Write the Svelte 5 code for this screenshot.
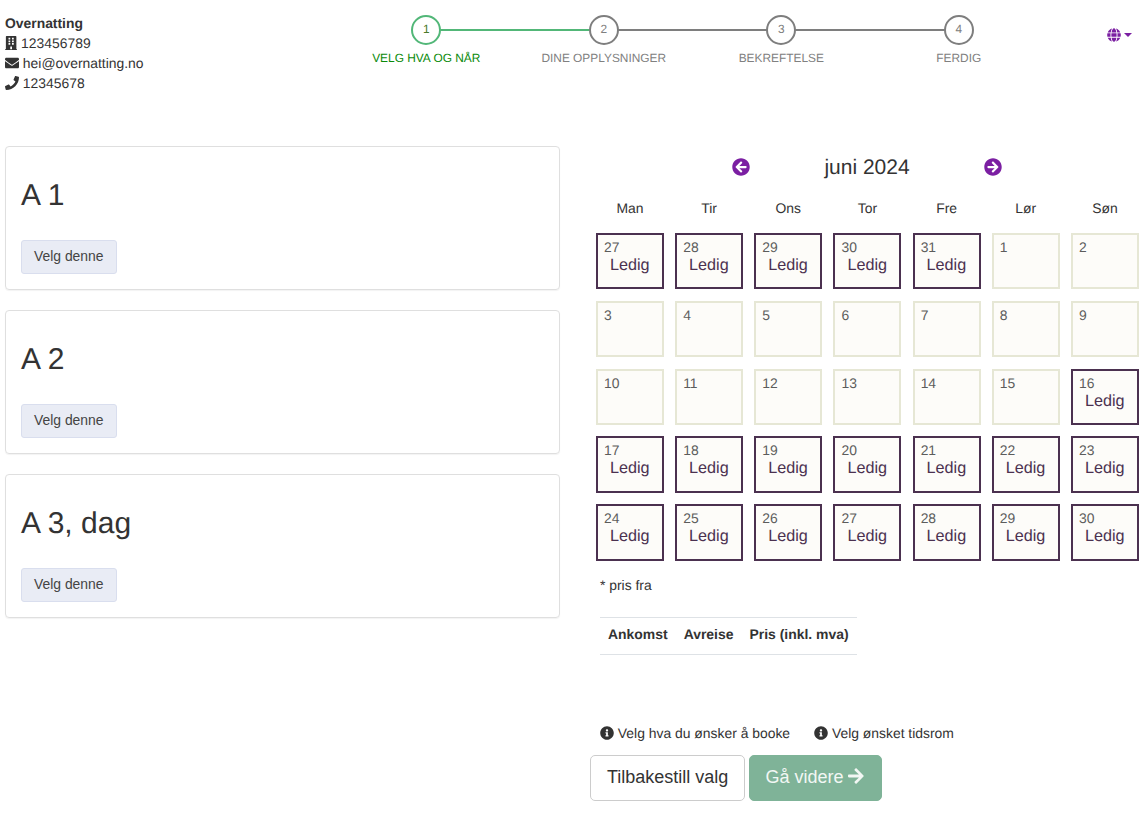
<script>
  const steps = [
    { n: 1, label: "VELG HVA OG NÅR", done: true },
    { n: 2, label: "DINE OPPLYSNINGER" },
    { n: 3, label: "BEKREFTELSE" },
    { n: 4, label: "FERDIG" },
  ];
  const rooms = ["A 1", "A 2", "A 3, dag"];
  const weekdays = ["Man", "Tir", "Ons", "Tor", "Fre", "Lør", "Søn"];

  // first row is the tail of May, 16th onwards is bookable
  const days = [
    ...[27, 28, 29, 30, 31].map(d => ({ d, free: true })),
    ...Array.from({ length: 30 }, (_, i) => ({ d: i + 1, free: i + 1 >= 16 })),
  ];

  const icons = {
    building: "M436 480h-20V24c0-13.3-10.7-24-24-24H56C42.7 0 32 10.7 32 24v456H12c-6.6 0-12 5.4-12 12v20h448v-20c0-6.6-5.4-12-12-12zM128 76c0-6.6 5.4-12 12-12h40c6.6 0 12 5.4 12 12v40c0 6.6-5.4 12-12 12h-40c-6.6 0-12-5.4-12-12V76zm0 96c0-6.6 5.4-12 12-12h40c6.6 0 12 5.4 12 12v40c0 6.6-5.4 12-12 12h-40c-6.6 0-12-5.4-12-12v-40zm52 148h-40c-6.6 0-12-5.4-12-12v-40c0-6.6 5.4-12 12-12h40c6.6 0 12 5.4 12 12v40c0 6.6-5.4 12-12 12zm76 160h-64v-84c0-6.6 5.4-12 12-12h40c6.6 0 12 5.4 12 12v84zm64-172c0 6.6-5.4 12-12 12h-40c-6.6 0-12-5.4-12-12v-40c0-6.6 5.4-12 12-12h40c6.6 0 12 5.4 12 12v40zm0-96c0 6.6-5.4 12-12 12h-40c-6.6 0-12-5.4-12-12v-40c0-6.6 5.4-12 12-12h40c6.6 0 12 5.4 12 12v40zm0-96c0 6.6-5.4 12-12 12h-40c-6.6 0-12-5.4-12-12V76c0-6.6 5.4-12 12-12h40c6.6 0 12 5.4 12 12v40z",
    envelope: "M502.3 190.8c3.9-3.1 9.7-.2 9.7 4.7V400c0 26.5-21.5 48-48 48H48c-26.5 0-48-21.5-48-48V195.6c0-5 5.7-7.8 9.7-4.7 22.4 17.4 52.1 39.5 154.1 113.6 21.1 15.4 56.7 47.8 92.2 47.6 35.7.3 72-32.8 92.3-47.6 102-74.1 131.6-96.3 154-113.7zM256 320c23.2.4 56.6-29.2 73.4-41.4 132.7-96.3 142.8-104.7 173.4-128.7 5.8-4.5 9.2-11.5 9.2-18.9v-19c0-26.5-21.5-48-48-48H48C21.5 64 0 85.5 0 112v19c0 7.4 3.4 14.3 9.2 18.9 30.6 23.9 40.7 32.4 173.4 128.7 16.8 12.2 50.2 41.8 73.4 41.4z",
    phone: "M493.4 24.6l-104-24c-11.3-2.6-22.9 3.3-27.5 13.9l-48 112c-4.2 9.8-1.4 21.3 6.9 28l60.6 49.6c-36 76.7-98.9 140.5-177.2 177.2l-49.6-60.6c-6.8-8.3-18.2-11.1-28-6.9l-112 48C3.9 366.5-2 378.1.6 389.4l24 104C27.1 504.2 36.7 512 48 512c256.1 0 464-207.5 464-464 0-11.2-7.7-20.9-18.6-23.4z",
    globe: "M336.5 160C322 70.7 287.8 8 248 8s-74 62.7-88.5 152h177zM152 256c0 22.2 1.2 43.5 3.3 64h185.3c2.1-20.5 3.3-41.8 3.3-64s-1.2-43.5-3.3-64H155.3c-2.1 20.5-3.3 41.8-3.3 64zm324.7-96c-28.6-67.9-86.5-120.4-158-141.6 24.4 33.8 41.2 84.7 50 141.6h108zM177.2 18.4C105.8 39.6 47.8 92.1 19.3 160h108c8.7-56.9 25.5-107.8 49.9-141.6zM487.4 192H372.7c2.1 21 3.3 42.5 3.3 64s-1.2 43-3.3 64h114.6c5.5-20.5 8.6-41.8 8.6-64s-3.1-43.5-8.5-64zM120 256c0-21.5 1.2-43 3.3-64H8.6C3.2 212.5 0 233.8 0 256s3.2 43.5 8.6 64h114.6c-2-21-3.2-42.5-3.2-64zm39.5 96c14.5 89.3 48.7 152 88.5 152s74-62.7 88.5-152h-177zm159.3 141.6c71.4-21.2 129.4-73.7 158-141.6h-108c-8.8 56.9-25.6 107.8-50 141.6zM19.3 352c28.6 67.9 86.5 120.4 158 141.6-24.4-33.8-41.2-84.7-50-141.6h-108z",
    info: "M256 8C119.043 8 8 119.083 8 256c0 136.997 111.043 248 248 248s248-111.003 248-248C504 119.083 392.957 8 256 8zm0 110c23.196 0 42 18.804 42 42s-18.804 42-42 42-42-18.804-42-42 18.804-42 42-42zm56 254c0 6.627-5.373 12-12 12h-88c-6.627 0-12-5.373-12-12v-24c0-6.627 5.373-12 12-12h12v-64h-12c-6.627 0-12-5.373-12-12v-24c0-6.627 5.373-12 12-12h64c6.627 0 12 5.373 12 12v100h12c6.627 0 12 5.373 12 12v24z",
    left: "M256 504C119 504 8 393 8 256S119 8 256 8s248 111 248 248-111 248-248 248zm28.9-143.6L209.4 288H392c13.3 0 24-10.7 24-24v-16c0-13.3-10.7-24-24-24H209.4l75.5-72.4c9.7-9.3 9.9-24.8.4-34.3l-11-10.9c-9.4-9.4-24.6-9.4-33.9 0L107.7 239c-9.4 9.4-9.4 24.6 0 33.9l132.7 132.7c9.4 9.4 24.6 9.4 33.9 0l11-10.9c9.5-9.5 9.3-25-.4-34.3z",
    right: "M256 8c137 0 248 111 248 248S393 504 256 504 8 393 8 256 119 8 256 8zm-28.9 143.6l75.5 72.4H120c-13.3 0-24 10.7-24 24v16c0 13.3 10.7 24 24 24h182.6l-75.5 72.4c-9.7 9.3-9.9 24.8-.4 34.3l11 10.9c9.4 9.4 24.6 9.4 33.9 0L404.3 273c9.4-9.4 9.4-24.6 0-33.9L271.6 106.3c-9.4-9.4-24.6-9.4-33.9 0l-11 10.9c-9.5 9.6-9.3 25.1.4 34.4z",
    arrow: "M190.5 66.9l22.2-22.2c9.4-9.4 24.6-9.4 33.9 0L441 239c9.4 9.4 9.4 24.6 0 33.9L246.6 467.3c-9.4 9.4-24.6 9.4-33.9 0l-22.2-22.2c-9.5-9.5-9.3-25 .4-34.3L311.4 296H24c-13.3 0-24-10.7-24-24v-32c0-13.3 10.7-24 24-24h287.4L190.9 101.2c-9.8-9.3-10-24.8-.4-34.3z",
  };
</script>

<div class="page">
  <header class="top">
    <div class="contact">
      <strong>Overnatting</strong>
      <div><svg class="ico" viewBox="0 0 448 512"><path d={icons.building} /></svg> 123456789</div>
      <div><svg class="ico" viewBox="0 0 512 512"><path d={icons.envelope} /></svg> hei@overnatting.no</div>
      <div><svg class="ico" viewBox="0 0 512 512"><path d={icons.phone} /></svg> 12345678</div>
    </div>

    <ol class="stepper">
      {#each steps as s}
        <li class="step" class:done={s.done}>
          <span class="circle">{s.n}</span>
          <span class="label">{s.label}</span>
        </li>
      {/each}
    </ol>

    <div class="lang">
      <svg class="globe" viewBox="0 0 496 512"><path d={icons.globe} /></svg>
      <span class="caret"></span>
    </div>
  </header>

  <main class="content">
    <section class="rooms">
      {#each rooms as r}
        <div class="card">
          <h2>{r}</h2>
          <button class="pick">Velg denne</button>
        </div>
      {/each}
    </section>

    <section class="side">
      <div class="calendar">
        <div class="month">
          <svg class="nav" viewBox="0 0 512 512"><path d={icons.left} /></svg>
          <span class="month-name">juni 2024</span>
          <svg class="nav" viewBox="0 0 512 512"><path d={icons.right} /></svg>
        </div>
        <div class="weekdays">
          {#each weekdays as w}<span>{w}</span>{/each}
        </div>
        <div class="days">
          {#each days as day}
            <div class="day" class:free={day.free}>
              <span class="num">{day.d}</span>
              {#if day.free}<span class="status">Ledig</span>{/if}
            </div>
          {/each}
        </div>
      </div>

      <p class="note">* pris fra</p>

      <table class="prices">
        <thead>
          <tr><th>Ankomst</th><th>Avreise</th><th>Pris (inkl. mva)</th></tr>
        </thead>
      </table>

      <div class="hints">
        <span><svg class="ico" viewBox="0 0 512 512"><path d={icons.info} /></svg> Velg hva du ønsker å booke</span>
        <span><svg class="ico" viewBox="0 0 512 512"><path d={icons.info} /></svg> Velg ønsket tidsrom</span>
      </div>

      <div class="actions">
        <button class="btn reset">Tilbakestill valg</button>
        <button class="btn next">Gå videre <svg class="next-ico" viewBox="0 0 448 512"><path d={icons.arrow} /></svg></button>
      </div>
    </section>
  </main>
</div>

<style>
  :global(body) {
    margin: 0;
    background: #fff;
    color: #333;
    font-family: "Liberation Sans", Arial, sans-serif;
    font-size: 13.9px;
    line-height: 20px;
    text-rendering: geometricPrecision;
  }

  .page { padding: 13px 0 0 5px; }

  /* ── Header ── */
  .top {
    display: grid;
    grid-template-columns: 332.5px 710px 1fr;
    height: 80px;
  }
  .contact strong { display: block; }
  .ico {
    width: 14px;
    height: 14px;
    fill: currentColor;
    vertical-align: -2px;
  }
  .contact div:nth-child(2) .ico { width: 12.25px; }

  .stepper {
    display: grid;
    grid-template-columns: repeat(4, 1fr);
    margin: 0;
    padding: 2px 0 0;
    list-style: none;
  }
  .step {
    position: relative;
    display: flex;
    flex-direction: column;
    align-items: center;
    color: #808080;
    font-size: 11.9px;
  }
  .step:not(:last-child)::after {
    content: "";
    position: absolute;
    top: 14px;
    left: 50%;
    width: 100%;
    height: 2px;
    background: #7e7e7e;
  }
  .step.done::after { background: #52b778 !important; }
  .circle {
    position: relative;
    z-index: 1;
    box-sizing: border-box;
    width: 30px;
    height: 30px;
    border: 2px solid #7e7e7e;
    border-radius: 50%;
    background: #fff;
    text-align: center;
    line-height: 24px;
  }
  .label { margin-top: 3px; line-height: 20px; }
  .done .circle { border-color: #52b778; color: #4a7a2a; }
  .done .label { color: #0a8a0a; }

  .lang {
    display: flex;
    align-items: center;
    gap: 3px;
    height: 16px;
    padding: 14px 0 0 59px;
    color: #7b1fa2;
  }
  .globe { width: 14px; height: 14px; fill: currentColor; }
  .caret {
    border: 4px solid transparent;
    border-top-color: currentColor;
    border-bottom: 0;
  }

  /* ── Content ── */
  .content {
    display: grid;
    grid-template-columns: 555px 1fr;
    margin-top: 53px;
  }
  .rooms {
    display: flex;
    flex-direction: column;
    gap: 20px;
  }
  .card {
    box-sizing: border-box;
    height: 144px;
    padding: 31px 15px 0;
    border: 1px solid #dfdfdf;
    border-radius: 4px;
    box-shadow: 0 1px 1px rgba(0, 0, 0, 0.05);
  }
  .card h2 {
    margin: 0 0 26px;
    font-size: 30px;
    font-weight: 400;
    line-height: 36px;
  }
  .pick {
    height: 34px;
    padding: 0 12px 2px;
    border: 1px solid #d9deee;
    border-radius: 3px;
    background: #e9ecf5;
    color: #444;
    font: inherit;
  }

  .side { padding-left: 30px; }
  .calendar { margin-left: 6px; width: 543px; }
  .month {
    display: grid;
    grid-template-columns: 18px 234px 18px;
    justify-content: center;
    align-items: center;
    height: 42px;
    margin-left: -1px;
  }
  .month-name { padding-top: 1px; text-align: center; font-size: 21px; line-height: 41px; }
  .nav { width: 18px; height: 18px; fill: #7b1fa2; }
  .weekdays {
    display: grid;
    grid-template-columns: repeat(7, 68px);
    justify-content: space-between;
    height: 45px;
    padding-top: 10px;
    box-sizing: border-box;
    text-align: center;
  }
  .days {
    display: grid;
    grid-template-columns: repeat(7, 68px);
    grid-auto-rows: 56.4px;
    justify-content: space-between;
    row-gap: 11.4px;
  }
  .day {
    box-sizing: border-box;
    display: flex;
    flex-direction: column;
    padding: 4px 6.5px 3px 6px;
    border: 2px solid #e6e7d5;
    background: #fdfcf9;
  }
  .day.free { border-color: #4b3150; }
  .num { color: #5c5c5c; line-height: 16px; }
  .status {
    color: #4b3150;
    font-size: 16.2px;
    line-height: 20px;
    text-align: center;
  }

  .note { margin: 14.4px 0 0 10px; }

  .prices {
    margin: 22px 0 0 10px;
    border-collapse: collapse;
    border-top: 1px solid #dee2e6;
    border-bottom: 1px solid #dee2e6;
    font-size: 13.95px;
  }
  .prices th { padding: 6px 8px 10px; height: 20px; font-weight: 700; text-align: left; }

  .hints {
    display: flex;
    gap: 24px;
    margin: 68px 0 0 10px;
  }
  .actions {
    display: flex;
    gap: 4px;
    margin-top: 12px;
  }
  .btn {
    box-sizing: border-box;
    height: 46px;
    padding: 0 16px 2px;
    border: 1px solid #ccc;
    border-radius: 5px;
    background: #fff;
    color: #333;
    font: inherit;
    font-size: 18px;
  }
  .next {
    padding-right: 17px;
    padding-left: 15px;
    border-color: #7fb398;
    background: #7fb398;
    color: #f2f7f4;
  }
  .next-ico { width: 15.75px; height: 18px; fill: currentColor; vertical-align: -2px; }
</style>
